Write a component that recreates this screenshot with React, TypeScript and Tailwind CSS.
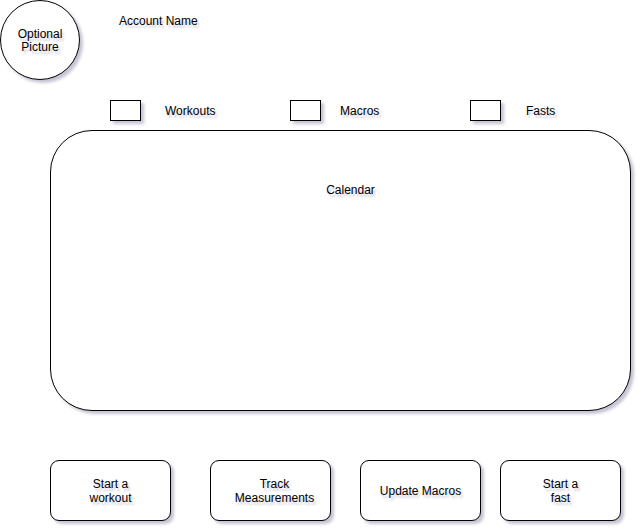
import React from 'react';

const shadow = 'shadow-[3px_3px_3px_rgba(90,90,130,0.35)]';
const textShadow = '[text-shadow:2px_3px_2px_rgba(90,90,130,0.3)]';

function Legend({ label, boxLeft, labelLeft, width }: { label: string; boxLeft: string; labelLeft: string; width: string }) {
  return (
    <div className={`flex items-center ${boxLeft} ${width}`}>
      <div className={`w-[31px] h-[21px] border border-black bg-white ${shadow}`} />
      <span className={`${labelLeft} ${textShadow}`}>{label}</span>
    </div>
  );
}

function ActionButton({ children, className }: { children: React.ReactNode; className?: string }) {
  return (
    <div
      className={`w-[121px] h-[61px] rounded-[9px] border border-black bg-white flex items-center justify-center text-center leading-[14px] ${shadow} ${className ?? ''}`}
    >
      <span className={textShadow}>{children}</span>
    </div>
  );
}

export default function App() {
  return (
    <div className="w-[642px] h-[532px] bg-white text-black text-[12px] leading-[14px] font-['Liberation_Sans',Arial,sans-serif] overflow-hidden">
      <div className="flex items-start h-[100px]">
        <div className={`w-[80px] h-[80px] rounded-full border border-black bg-white flex items-center justify-center text-center leading-[13px] ${shadow}`}>
          <span className={`${textShadow} pt-px`}>
            Optional
            <br />
            Picture
          </span>
        </div>
        <div className={`ml-[39px] mt-[14px] ${textShadow}`}>Account Name</div>
      </div>

      <div className="flex items-center h-[21px]">
        <Legend label="Workouts" boxLeft="ml-[110px]" labelLeft="ml-[24px]" width="w-[180px]" />
        <Legend label="Macros" boxLeft="" labelLeft="ml-[19px]" width="w-[180px]" />
        <Legend label="Fasts" boxLeft="" labelLeft="ml-[25px]" width="w-[120px]" />
      </div>

      <div className={`ml-[50px] mt-[9px] w-[581px] h-[281px] rounded-[42px] border border-black bg-white flex justify-center pt-[52px] pl-[20px] ${shadow}`}>
        <span className={textShadow}>Calendar</span>
      </div>

      <div className="flex mt-[49px] ml-[50px]">
        <ActionButton>
          Start a
          <br />
          workout
        </ActionButton>
        <ActionButton className="ml-[39px] pl-[8px]">
          Track
          <br />
          Measurements
        </ActionButton>
        <ActionButton className="ml-[29px]">Update Macros</ActionButton>
        <ActionButton className="ml-[19px]">
          Start a
          <br />
          fast
        </ActionButton>
      </div>
    </div>
  );
}
